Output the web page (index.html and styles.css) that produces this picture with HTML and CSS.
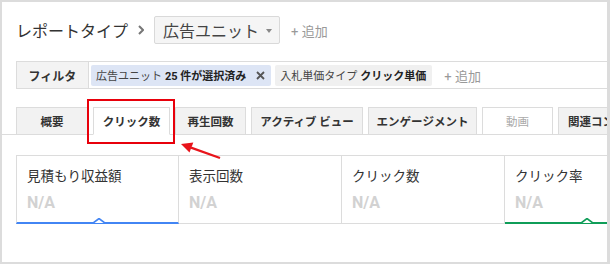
FILE: index.html
```html
<!DOCTYPE html>
<html lang="ja">
<head>
    <meta charset="UTF-8">
    <meta name="viewport" content="width=device-width, initial-scale=1.0">
    <title>レポート</title>
    <link rel="stylesheet" href="styles.css">
</head>
<body>
    <div class="frame">
        <div class="page">
            <div class="title-row">
                <span class="rt-label">レポートタイプ</span>
                <svg class="chev" width="6" height="10" viewBox="0 0 6 10"><path d="M1 1 L5 5 L1 9" fill="none" stroke="#777" stroke-width="2"/></svg>
                <div class="dropdown">広告ユニット<span class="caret"></span></div>
                <span class="add">+ 追加</span>
            </div>

            <div class="filter-bar">
                <div class="filter-label">フィルタ</div>
                <div class="chip chip-blue">広告ユニット <b>25 件が選択済み</b>
                    <svg class="x" width="9" height="9" viewBox="0 0 9 9"><path d="M1 1 L8 8 M8 1 L1 8" stroke="#555" stroke-width="1.8"/></svg>
                </div>
                <div class="chip">入札単価タイプ <b>クリック単価</b></div>
                <span class="add add-sm">+ 追加</span>
            </div>

            <div class="tabs">
                <div class="tab t1">概要</div>
                <div class="tab t2 active">クリック数</div>
                <div class="tab t3">再生回数</div>
                <div class="tab t4">アクティブ ビュー</div>
                <div class="tab t5">エンゲージメント</div>
                <div class="tab t6 disabled">動画</div>
                <div class="tab t7">関連コンテンツ</div>
            </div>

            <div class="cards">
                <div class="card blue">
                    <div class="c-label">見積もり収益額</div>
                    <div class="c-val">N/A</div>
                    <svg class="notch" width="12" height="6" viewBox="0 0 12 6"><path d="M0 5 L6 0.5 L12 5" fill="#fff" stroke="#4285f4" stroke-width="1.6"/></svg>
                </div>
                <div class="card">
                    <div class="c-label">表示回数</div>
                    <div class="c-val">N/A</div>
                </div>
                <div class="card">
                    <div class="c-label">クリック数</div>
                    <div class="c-val">N/A</div>
                </div>
                <div class="card green">
                    <div class="c-label">クリック率</div>
                    <div class="c-val">N/A</div>
                    <svg class="notch" width="12" height="6" viewBox="0 0 12 6"><path d="M0 5 L6 0.5 L12 5" fill="#fff" stroke="#0f9d58" stroke-width="1.6"/></svg>
                </div>
            </div>
        </div>

        <!-- annotation -->
        <div class="mark"></div>
        <svg class="arrow" width="60" height="30" viewBox="0 0 60 30">
            <path d="M50 23 L21 12.6" stroke="#e8141b" stroke-width="2.2"/>
            <path d="M11 9 L23.3 7.6 L19.5 17.6 Z" fill="#e8141b"/>
        </svg>
    </div>
</body>
</html>
```

FILE: styles.css
```css
* {box-sizing: border-box;}
body {margin: 0; font-family: Roboto, "Noto Sans CJK JP", sans-serif; color: #333;}

.frame {
    position: relative;
    width: 610px; height: 264px;
    border: 2px solid #dcdcdc; border-right-width: 3px;
    background: #fff; overflow: hidden;
}
.page {padding: 14px 0 0 14px;}

/* title */
.title-row {display: flex; align-items: center; height: 28px; white-space: nowrap;}
.rt-label {font-size: 16px; color: #333;}
.chev {margin: 0 10px 0 10px;}
.dropdown {
    display: flex; align-items: center;
    height: 28px; padding: 0 7px 0 8px;
    background: #f5f5f5; border: 1px solid #d9d9d9; border-radius: 2px;
    font-size: 16px; color: #444;
}
.caret {
    width: 0; height: 0; margin-left: 7px; margin-top: 2px;
    border-left: 3.5px solid transparent; border-right: 3.5px solid transparent;
    border-top: 4px solid #888;
}
.add {margin-left: 11px; font-size: 13px; color: #999;}

/* filter */
.filter-bar {
    display: flex; align-items: center; white-space: nowrap;
    margin-top: 17px; height: 28px; width: 700px;
    border: 1px solid #dcdcdc;
}
.filter-label {
    display: flex; align-items: center; justify-content: center;
    width: 72px; height: 100%;
    background: #f3f3f3; border-right: 1px solid #dcdcdc;
    font-size: 12px; font-weight: bold;
}
.chip {
    display: flex; align-items: center; gap: 3px;
    height: 21px; margin-left: 4px; padding: 0 6px 0 5px;
    background: #f0f0f0; border-radius: 2px;
    font-size: 11px; color: #444;
}
.chip b {color: #222;}
.chip-blue {margin-left: 2px; background: #dde5f5;}
.chip-blue .x {margin-left: 7px;}
.add-sm {margin-left: 12px;}

/* tabs */
.tabs {
    display: flex; gap: 5px; white-space: nowrap;
    margin: 18px 0 0 -14px; padding-left: 14px;
    border-bottom: 1px solid #dcdcdc;
    width: 720px;
}
.tab {
    display: flex; align-items: center; justify-content: center;
    height: 28px; margin-bottom: -1px;
    background: #f2f2f2; border: 1px solid #dcdcdc;
    font-size: 11.5px; font-weight: bold; color: #333;
}
.tab.active {background: #fff; border-bottom-color: #fff;}
.tab.disabled {background: #fff; color: #aaa; font-weight: normal;}
.t1 {width: 72px;}
.t2 {width: 77px;}
.t3 {width: 71px;}
.t4 {width: 112px;}
.t5 {width: 109px;}
.t6 {width: 71px;}
.t7 {width: 110px; justify-content: flex-start; padding-left: 9px;}

/* cards */
.cards {
    display: flex; margin-top: 20px; width: 700px;
}
.card {
    position: relative;
    width: 163px; height: 69px; padding: 11px 0 0 10px;
    border-top: 1px solid #dcdcdc; border-right: 1px solid #dcdcdc;
    border-bottom: 1px solid #dcdcdc;
}
.card:first-child {border-left: 1px solid #dcdcdc;}
.card.blue {border-bottom: 2px solid #4285f4;}
.card.green {border-bottom: 2px solid #0f9d58;}
.c-label {font-size: 13.5px; line-height: 19px; color: #333;}
.c-val {margin-top: 7px; font-size: 16px; font-weight: bold; line-height: 20px; color: #d2d2d2;}
.notch {position: absolute; bottom: -2px; left: 76px;}

/* annotation overlays */
.mark {
    position: absolute; left: 85px; top: 97px;
    width: 88px; height: 45px;
    border: 2px solid #e8000b;
}
.arrow {position: absolute; left: 168px; top: 133px;}
```
